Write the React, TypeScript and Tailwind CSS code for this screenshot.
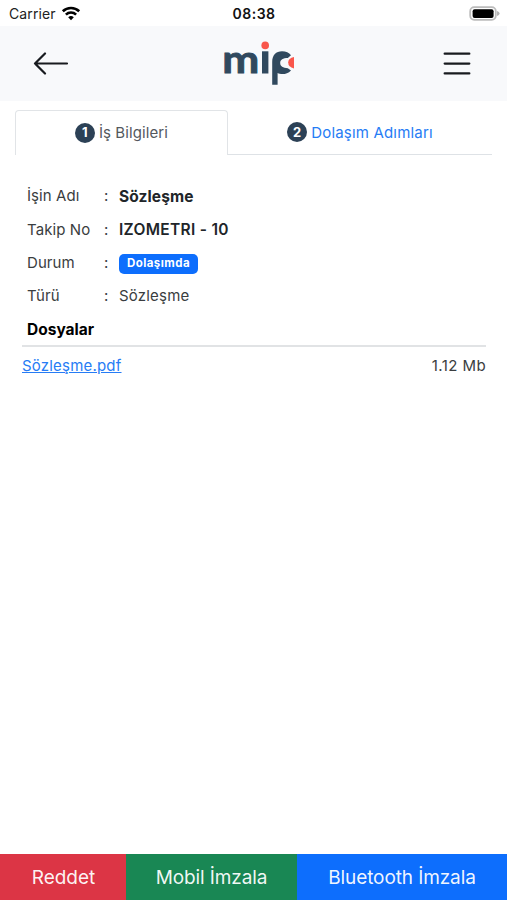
import React from "react";

function StatusBar() {
  return (
    <div className="grid h-[26px] grid-cols-3 items-center bg-white pt-[2px] pl-[9px] pr-[7px] text-[#111]">
      <div className="flex items-center gap-[5px]">
        <span className="text-[14px] leading-none tracking-[0.1px] text-[#222]">Carrier</span>
        <svg className="-mt-[2px]" width="20" height="15" viewBox="0 0 20 15" fill="none" stroke="#000" strokeWidth="2.6">
          <path d="M1.8 5.3 A11.8 11.8 0 0 1 18.2 5.3" />
          <path d="M4.9 8.6 A7.3 7.3 0 0 1 15.1 8.6" />
          <path d="M10 14.2 L7.2 11.3 A4 4 0 0 1 12.8 11.3 Z" fill="#000" stroke="none" />
        </svg>
      </div>
      <div className="-ml-[1px] text-center text-[14px] font-semibold leading-none tracking-[0.5px]">08:38</div>
      <div className="-mt-[2px] flex justify-end">
        <svg width="31" height="15" viewBox="0 0 31 15">
          <rect x="1.2" y="1.2" width="25.6" height="12.6" rx="4" fill="#fff" stroke="#bcbcbc" strokeWidth="1.8" />
          <rect x="3.6" y="3.2" width="21" height="8.8" rx="2" fill="#000" />
          <path d="M28 5 Q30.6 5.6 30.6 7.5 Q30.6 9.4 28 10 Z" fill="#b4b4b4" />
        </svg>
      </div>
    </div>
  );
}

function Logo() {
  return (
    <svg className="ml-[8px]" width="74" height="67" viewBox="0 0 74 67" role="img" aria-label="mip">
      <text
        x="-0.8"
        y="43.3"
        fill="#30495e"
        stroke="#30495e"
        strokeWidth="0.9"
        fontSize="39"
        fontWeight="700"
        fontFamily="Lato, sans-serif"
        textLength="37"
        lengthAdjust="spacingAndGlyphs"
      >
        m
      </text>
      <rect x="39" y="21.3" width="6.4" height="22.2" fill="#30495e" />
      <circle cx="42.2" cy="15.4" r="3.8" fill="#f9564b" />
      <path
        d="M49.2 54.7 V32 C49.2 25 53 21.2 59 21.2 C63 21.2 66 22.8 68 25.2 L64.8 28 C60 28 57.2 29.6 57.2 33 C57.2 36.4 60 38 64.8 38.2 L68 40.4 C65.5 43 62.5 44 59.5 44 C57.5 44 55.8 43.7 54.6 43 V54.7 Z"
        fill="#30495e"
      />
      <path d="M71 27 Q65.2 28 65.2 32.6 Q65.2 37.4 71 38.4 Z" fill="#f9564b" />
    </svg>
  );
}

function Header() {
  return (
    <header className="flex h-[75px] items-center justify-between bg-[#f8f9fb] pl-[33px] pr-[36px]">
      <button aria-label="Geri">
        <svg width="36" height="24" viewBox="0 0 36 24" fill="none" stroke="#181b1f" strokeWidth="2.2" strokeLinecap="round" strokeLinejoin="round">
          <path d="M34 11.5 H2 M12 1.5 L2 11.5 L12 21.5" />
        </svg>
      </button>
      <Logo />
      <button aria-label="Menü">
        <svg width="28" height="24" viewBox="0 0 28 24" stroke="#181b1f" strokeWidth="2.3" strokeLinecap="round">
          <path d="M1.7 1.7 H26.3 M1.7 11.6 H26.3 M1.7 21.4 H26.3" />
        </svg>
      </button>
    </header>
  );
}

function Step({ n }: { n: number }) {
  return (
    <span className="flex size-[20px] items-center justify-center rounded-full bg-[#2c4156] text-[13px] font-bold leading-none text-white">
      {n}
    </span>
  );
}

function Tabs() {
  return (
    <nav className="mx-[15px] mt-[9px] flex h-[45px] text-[15px]">
      <div className="flex w-[213px] items-center justify-center gap-[4px] rounded-t-[4px] border border-b-0 border-[#e1e4e7] pb-[1px] text-[#53585d]">
        <Step n={1} />
        <span className="pt-[1px] tracking-[0.1px]">İş Bilgileri</span>
      </div>
      <div className="flex flex-1 items-center justify-center gap-[4px] border-b border-[#dee2e6] text-[#267cf5]">
        <Step n={2} />
        <span className="pt-[2px] tracking-[0.18px]">Dolaşım Adımları</span>
      </div>
    </nav>
  );
}

function Row({ label, children }: { label: string; children: React.ReactNode }) {
  return (
    <div className="flex h-[33.3px] items-center">
      <span className="w-[77px] tracking-[0.08px]">{label}</span>
      <span className="w-[15px]">:</span>
      {children}
    </div>
  );
}

export default function App() {
  return (
    <div className="flex h-[900px] w-full flex-col bg-white font-['Inter','Liberation_Sans',sans-serif] text-[15px] text-[#3a3d40]">
      <StatusBar />
      <Header />
      <Tabs />
      <main className="flex-1 pl-[22px] pr-[21px] pt-[25px]">
        <div className="pl-[5px]">
          <Row label="İşin Adı">
            <b className="text-[15.5px] font-bold tracking-[0.1px] text-[#212529]">Sözleşme</b>
          </Row>
          <Row label="Takip No">
            <b className="text-[15.5px] font-semibold tracking-[0.3px] text-[#212529]">IZOMETRI - 10</b>
          </Row>
          <Row label="Durum">
            <span className="mt-[1px] flex h-[20px] w-[79px] items-center justify-center rounded-[5px] bg-[#0d6efd] text-[11.5px] font-bold tracking-[0.45px] text-white">
              Dolaşımda
            </span>
          </Row>
          <Row label="Türü">
            <span className="tracking-[0.2px]">Sözleşme</span>
          </Row>
        </div>
        <h2 className="flex h-[34px] items-center border-b-2 border-[#e1e3e5] pl-[5px] text-[15.5px] font-bold text-black">
          Dosyalar
        </h2>
        <div className="flex h-[38px] items-center justify-between">
          <a className="tracking-[0.2px] text-[#267cf5] underline">Sözleşme.pdf</a>
          <span className="tracking-[0.4px]">1.12 Mb</span>
        </div>
      </main>
      <footer className="flex h-[46px] text-[19px] text-white/95">
        <button className="w-[126px] bg-[#dc3545] pl-[1px] pt-[2px]">Reddet</button>
        <button className="w-[171px] bg-[#198754] pt-[2px] tracking-[-0.1px]">Mobil İmzala</button>
        <button className="flex-1 bg-[#0d6efd] pt-[2px] tracking-[-0.1px]">Bluetooth İmzala</button>
      </footer>
    </div>
  );
}
